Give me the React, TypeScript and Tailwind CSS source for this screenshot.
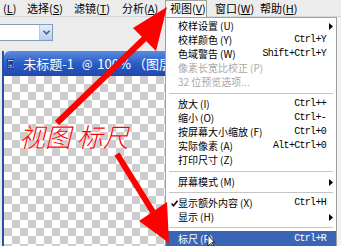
import React from 'react';

type MenuItem =
  | { label: string; hotkey?: string; shortcut?: string; sub?: boolean; disabled?: boolean; checked?: boolean; active?: boolean }
  | 'sep';

const viewMenu: MenuItem[] = [
  { label: '校样设置', hotkey: 'U', sub: true },
  { label: '校样颜色', hotkey: 'Y', shortcut: 'Ctrl+Y' },
  { label: '色域警告', hotkey: 'W', shortcut: 'Shift+Ctrl+Y' },
  { label: '像素长宽比校正', hotkey: 'P', disabled: true },
  { label: '32 位预览选项...', disabled: true },
  'sep',
  { label: '放大', hotkey: 'I', shortcut: 'Ctrl++' },
  { label: '缩小', hotkey: 'O', shortcut: 'Ctrl+-' },
  { label: '按屏幕大小缩放', hotkey: 'F', shortcut: 'Ctrl+0' },
  { label: '实际像素', hotkey: 'A', shortcut: 'Alt+Ctrl+0' },
  { label: '打印尺寸', hotkey: 'Z' },
  'sep',
  { label: '屏幕模式', hotkey: 'M', sub: true },
  'sep',
  { label: '显示额外内容', hotkey: 'X', shortcut: 'Ctrl+H', checked: true },
  { label: '显示', hotkey: 'H', sub: true },
  'sep',
  { label: '标尺', hotkey: 'R', shortcut: 'Ctrl+R', active: true },
];

const MenuBarLabel: React.FC<{ text: string; hotkey: string }> = ({ text, hotkey }) => (
  <span>
    {text}(<span className="underline underline-offset-1">{hotkey}</span>)
  </span>
);

export default function App() {
  let sepCount = 0;
  return (
    <div className="relative w-[341px] h-[246px] overflow-hidden bg-[#ececec] font-['Noto_Sans_CJK_SC',sans-serif] text-black select-none">
      {/* menu bar */}
      <div className="h-[17px] flex items-center text-[11px] leading-none border-b border-[#d8d8d8]">
        <span className="w-[27px] pl-[3px]">
          (<span className="underline underline-offset-1">L</span>)
        </span>
        <span className="w-[47px]"><MenuBarLabel text="选择" hotkey="S" /></span>
        <span className="w-[48px]"><MenuBarLabel text="滤镜" hotkey="T" /></span>
        <span className="w-[43px]"><MenuBarLabel text="分析" hotkey="A" /></span>
        <span className="w-[42px] h-[17px] flex items-center pl-[4px] bg-[#f7f7f7] border-x border-t border-[#a0a0a0]">
          <MenuBarLabel text="视图" hotkey="V" />
        </span>
        <span className="w-[45px] ml-[8px]"><MenuBarLabel text="窗口" hotkey="W" /></span>
        <span><MenuBarLabel text="帮助" hotkey="H" /></span>
      </div>

      {/* options bar */}
      <div className="h-[34px] flex items-start pt-[7px]">
        <div className="w-[53px] h-[17px] flex bg-white border border-[#7f9db9] border-l-0">
          <div className="flex-1" />
          <div className="w-[13px] h-full flex items-center justify-center bg-linear-to-b from-[#e6eefc] to-[#b9cdf2] border-l border-[#b5c6e6]">
            <svg width="7" height="5" viewBox="0 0 7 5">
              <path d="M0.5 0.8 L3.5 3.8 L6.5 0.8" stroke="#4d6185" strokeWidth="1.6" fill="none" />
            </svg>
          </div>
        </div>
      </div>

      {/* document window */}
      <div className="ml-[2px] w-[170px] h-[195px] flex flex-col border-l-2 border-[#2a4fa8]">
        <div className="h-[25px] flex items-center pl-[3px] rounded-tl-[6px] bg-linear-to-b from-[#5b8be0] via-[#2c5cc6] to-[#1f48aa] text-white text-[13px] leading-none whitespace-nowrap">
          <svg width="9" height="12" viewBox="0 0 9 12">
            <rect x="0.5" y="0.5" width="8" height="11" fill="#e8eefc" stroke="#0b2a7a" />
            <rect x="1.5" y="2" width="6" height="8.5" fill="#1a3c96" />
            <rect x="3" y="7" width="3" height="2" fill="#9fb6ec" />
          </svg>
          <span className="ml-[9px]">未标题-1</span>
          <span className="ml-[8px] text-[11px]">@</span>
          <span className="ml-[5px]">100%</span>
          <span className="ml-[2px]">（图层</span>
        </div>
        <div className="flex-1 bg-[conic-gradient(#cdcdcd_25%,#ffffff_0_50%,#cdcdcd_0_75%,#ffffff_0)] bg-[length:16px_16px]" />
      </div>

      {/* right strip */}
      <div className="absolute right-0 top-[17px] w-[4px] h-[229px] bg-[#f3f3f3]" />

      {/* view menu */}
      <div className="absolute left-[165px] top-[17px] w-[172px] h-[240px] bg-white border border-[#a0a0a0] pt-px text-[10px] leading-none">
        {viewMenu.map((item, i) => {
          if (item === 'sep') {
            sepCount += 1;
            return (
              <div key={i} className={`${sepCount <= 2 ? 'h-[8px]' : 'h-[7px]'} flex items-center px-[3px]`}>
                <div className="w-full h-px bg-[#c5c5c5]" />
              </div>
            );
          }
          return (
            <div
              key={i}
              className={`relative flex items-center pl-[12px] pr-[10px] ${item.active ? 'h-[15px] bg-[#3a64b4] text-white' : 'h-[14px]'} ${item.disabled ? 'text-[#a8a8a8]' : ''}`}
            >
              {item.checked && (
                <svg className="absolute left-[5px] top-[4px]" width="7" height="7" viewBox="0 0 7 7">
                  <path d="M0.5 3.5 L2.5 5.8 L6.5 0.8" stroke="#000" strokeWidth="1.5" fill="none" />
                </svg>
              )}
              <span className="flex-1 whitespace-nowrap">
                {item.label}
                {item.hotkey && <span className="ml-[2px]">({item.hotkey})</span>}
              </span>
              {item.shortcut && (
                <span className="font-['Liberation_Mono',monospace] tracking-[-0.7px] whitespace-nowrap">{item.shortcut}</span>
              )}
              {item.sub && (
                <svg className="absolute right-[3px] top-[4px]" width="4" height="7" viewBox="0 0 4 7">
                  <path d="M0 0 L4 3.5 L0 7 Z" fill="#000" />
                </svg>
              )}
            </div>
          );
        })}
      </div>

      {/* annotation text */}
      <div className="absolute left-[19px] top-[123px] text-[26px] leading-none italic font-light text-[#ff0000] whitespace-nowrap [text-shadow:0_0_1px_#ffffff,0_0_1px_#ffffff]">
        视图 标尺
      </div>

      {/* annotation arrows + cursor */}
      <svg className="absolute inset-0 pointer-events-none" width="341" height="246" viewBox="0 0 341 246">
        <line x1="57" y1="123" x2="146" y2="37" stroke="#ff0000" strokeWidth="6" />
        <polygon points="167,7 133,28 156,51" fill="#ff0000" />
        <line x1="117" y1="154" x2="153" y2="212" stroke="#ff0000" strokeWidth="6" />
        <polygon points="169,243 139,221 167,202" fill="#ff0000" />
        <path d="M208 235 L208 246 L210.5 243.5 L212.5 246 L213.5 245.3 L211.7 242.6 L214.5 242.4 Z" fill="#ffffff" stroke="#000" strokeWidth="0.7" />
      </svg>
    </div>
  );
}
